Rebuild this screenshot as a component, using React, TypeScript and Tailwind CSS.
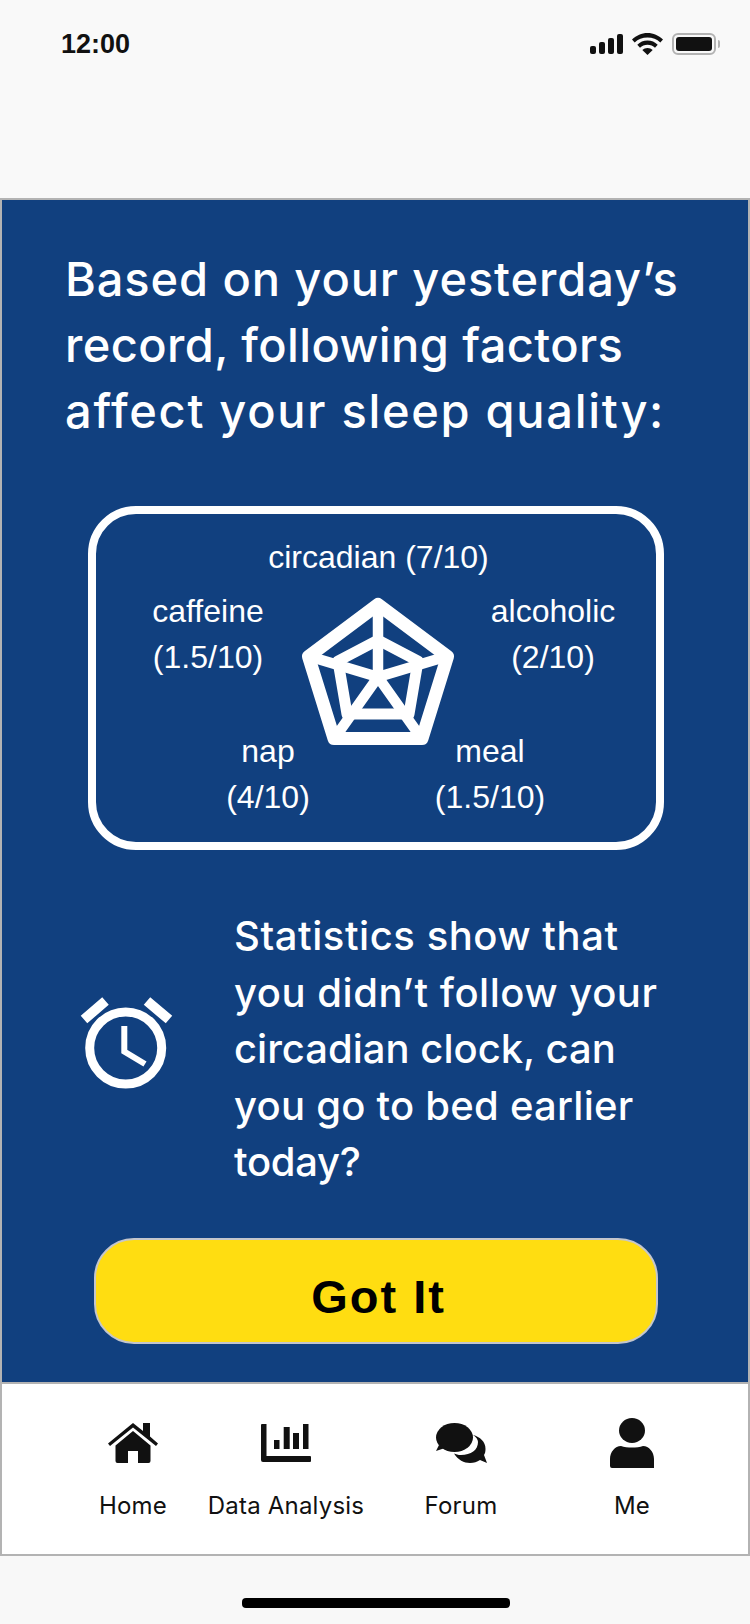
import React from 'react';

const HomeIcon = () => (
  <svg width="50" height="40" viewBox="0 0 50 40" fill="#111">
    <path d="M0 20.500 25 0l10 8V0h7v13.500l8 7-2 2.500L25 4.500 2 23z" />
    <path d="M25 8 7.500 22.500V38a2 2 0 0 0 2 2H20V28h10v12h10.500a2 2 0 0 0 2-2V22.500z" />
  </svg>
);

const ChartIcon = () => (
  <svg width="50" height="38" viewBox="0 0 50 38" fill="#111">
    <path d="M1 0h4.500v32H49a1 1 0 0 1 1 1V37a1 1 0 0 1-1 1H2a2 2 0 0 1-2-2V1a1 1 0 0 1 1-1z" />
    <rect x="13" y="16" width="5.500" height="9" />
    <rect x="22.700" y="3" width="6" height="22" />
    <rect x="32" y="9" width="6" height="16" />
    <rect x="42" y="0" width="5.500" height="25" />
  </svg>
);

const ChatIcon = () => (
  <svg width="51" height="40" viewBox="0 0 51 40" fill="#111">
    <ellipse cx="18.500" cy="14.500" rx="18.500" ry="14.500" />
    <path d="M3 22 0 28l9-3z" />
    <path d="M37 12c7 2 12.500 6.500 12.500 14 0 2.500-.5 4.500-1.500 6l3 8-7-3c-3 2-6 3-10 3-6 0-12-3-16-9.500 2 .8 4 1.500 7 1.500 10 0 17-5 17-13 0-2.500-2-5-5-7z" />
  </svg>
);

const UserIcon = () => (
  <svg width="44" height="50" viewBox="0 0 44 50" fill="#111">
    <ellipse cx="22" cy="12.500" rx="13" ry="12.500" />
    <path d="M11 28c3 1 7 1.500 11 1.500s8-.500 11-1.500c6 0 11 6 11 13v9H2a2 2 0 0 1-2-2v-7c0-7 5-13 11-13z" />
  </svg>
);

const RadarIcon = () => (
  <svg width="156" height="150" viewBox="300 596 156 150" fill="none" stroke="#fff" strokeLinejoin="round" strokeLinecap="butt">
    <path d="M378 604.500 447.500 656.500 422 738.500H334L308.500 656.500Z" strokeWidth="13" />
    <path d="M378 640 418 661 409 714H347L338 661Z" strokeWidth="11" />
    <path d="M378 604V677M448 656 378 677M422 739 378 677M334 739 378 677M308 656 378 677" strokeWidth="10.500" />
  </svg>
);

const AlarmIcon = () => (
  <svg width="95" height="108" viewBox="80 995 95 108" fill="none" stroke="#fff">
    <circle cx="125.700" cy="1048" r="36" strokeWidth="9" />
    <path d="M124.300 1026V1051.500L145 1064" strokeWidth="6" />
    <path d="M84 1019.500 105.500 1001M147 1001 169 1019.500" strokeWidth="10" />
  </svg>
);

const SignalIcon = () => (
  <svg width="33" height="20" viewBox="0 0 33 20" fill="#111">
    <rect x="0" y="12" width="6" height="8" rx="2" />
    <rect x="9" y="8" width="6" height="12" rx="2" />
    <rect x="18" y="4" width="6" height="16" rx="2" />
    <rect x="27" y="0" width="6" height="20" rx="2" />
  </svg>
);

const WifiIcon = () => (
  <svg width="31" height="22" viewBox="0 0 31 22" fill="#111">
    <path d="M15.500 0C9.500 0 4.500 2.500 0 6.500L2.700 9.500C6 6.300 10.500 4.500 15.500 4.500S25 6.300 28.300 9.500L31 6.500C26.500 2.500 21.500 0 15.500 0Z" />
    <path d="M15.500 7.500C11.500 7.500 8 9 5.300 11.800L8 14.800C10 12.800 12.500 11.800 15.500 11.800S21 12.800 23 14.800L25.700 11.800C23 9 19.500 7.500 15.500 7.500Z" />
    <path d="M15.500 15C13.500 15 11.700 15.700 10.300 17L15.500 22 20.700 17C19.300 15.700 17.500 15 15.500 15Z" />
  </svg>
);

const BatteryIcon = () => (
  <div className="flex items-center">
    <div className="h-[22px] w-[44px] rounded-[6px] border-2 border-[#b3b3b3] p-[2px]">
      <div className="h-full w-full rounded-[3px] bg-[#111]" />
    </div>
    <div className="ml-[2px] h-[8px] w-[2px] rounded-r-full bg-[#b3b3b3]" />
  </div>
);

const tabs = [
  { label: 'Home', icon: <HomeIcon />, width: 'w-[142px]' },
  { label: 'Data Analysis', icon: <ChartIcon />, width: 'w-[164px]' },
  { label: 'Forum', icon: <ChatIcon />, width: 'w-[186px]' },
  { label: 'Me', icon: <UserIcon />, width: 'w-[156px]' },
];

const App: React.FC = () => {
  return (
    <div className="flex h-[1624px] w-[750px] flex-col overflow-hidden bg-[#f8f8f8] font-['Liberation_Sans',sans-serif]">
      {/* Status bar */}
      <div className="flex h-[198px] items-start justify-between bg-[#f9f9f9] pl-[61px] pr-[30px] pt-[28px]">
        <span className="text-[27px] font-bold leading-[32px] text-[#111]">12:00</span>
        <div className="flex items-center gap-[9px] pt-[5px]">
          <SignalIcon />
          <WifiIcon />
          <BatteryIcon />
        </div>
      </div>

      {/* Main panel */}
      <div className="flex h-[1186px] flex-col border-2 border-[#b3b3b3] bg-[#11407f] text-white">
        <div className="pl-[63px] pt-[46px] font-['Inter',sans-serif] text-[47px] font-medium leading-[66px]">
          <p className="tracking-[0.9px]">Based on your yesterday’s</p>
          <p className="tracking-[0.4px]">record, following factors</p>
          <p className="tracking-[1.7px]">affect your sleep quality:</p>
        </div>

        {/* Factors card */}
        <div className="ml-[86px] mt-[62px] h-[344px] w-[576px] rounded-[48px] border-[8px] border-white text-[32px] leading-[46px]">
          <p className="mt-[20px] pl-[5px] text-center">circadian (7/10)</p>
          <div className="mt-[8px] flex items-start">
            <div className="ml-[52px] w-[120px] text-center">
              <p>caffeine</p>
              <p>(1.5/10)</p>
            </div>
            <div className="ml-[32px] mt-[8px]"><RadarIcon /></div>
            <div className="ml-[32px] w-[130px] text-center">
              <p>alcoholic</p>
              <p>(2/10)</p>
            </div>
          </div>
          <div className="-mt-[18px] flex">
            <div className="ml-[127px] w-[90px] text-center">
              <p>nap</p>
              <p>(4/10)</p>
            </div>
            <div className="ml-[117px] w-[120px] text-center">
              <p>meal</p>
              <p>(1.5/10)</p>
            </div>
          </div>
        </div>

        {/* Advice */}
        <div className="mt-[58px] flex items-center">
          <div className="ml-[78px]"><AlarmIcon /></div>
          <div className="ml-[59px] font-['Inter',sans-serif] text-[40px] font-medium leading-[56.500px]">
            <p className="tracking-[0.55px]">Statistics show that</p>
            <p className="tracking-[0.55px]">you didn’t follow your</p>
            <p className="tracking-[0px]">circadian clock, can</p>
            <p className="tracking-[0.25px]">you go to bed earlier</p>
            <p className="tracking-[-0.3px]">today?</p>
          </div>
        </div>

        <button className="ml-[92px] mt-[47px] h-[106px] w-[564px] rounded-[40px] border-2 border-[#c4c6cc] bg-[#ffdd11] pl-[5px] pt-[14px] text-[47px] font-bold tracking-[2px] text-black">
          Got It
        </button>
      </div>

      {/* Tab bar */}
      <div className="flex h-[172px] border-x-2 border-b-2 border-[#b3b3b3] bg-white pl-[60px]">
        {tabs.map((tab) => (
          <div key={tab.label} className={`${tab.width} flex flex-col items-center`}>
            <div className="mt-[34px] flex h-[50px] items-center">{tab.icon}</div>
            <span className="mt-[23px] font-['Inter',sans-serif] text-[24px] leading-[30px] tracking-[0.2px] text-[#111]">{tab.label}</span>
          </div>
        ))}
      </div>

      {/* Home indicator */}
      <div className="flex flex-1 justify-center pl-[2px] pt-[42px]">
        <div className="h-[10px] w-[268px] rounded-[4px] bg-black" />
      </div>
    </div>
  );
};

export default App;
